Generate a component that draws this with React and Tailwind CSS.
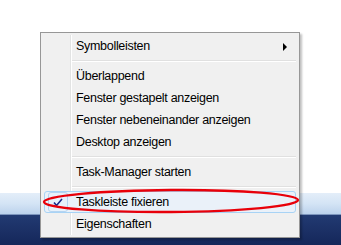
import React from 'react';

const items = [
    { label: 'Symbolleisten', arrow: true },
    { sep: true },
    { label: 'Überlappend' },
    { label: 'Fenster gestapelt anzeigen' },
    { label: 'Fenster nebeneinander anzeigen' },
    { label: 'Desktop anzeigen' },
    { sep: true },
    { label: 'Task-Manager starten' },
    { sep: true },
    { label: 'Taskleiste fixieren', checked: true },
    { label: 'Eigenschaften' },
];

const MenuItem = ({ item }) => {
    if (item.sep) {
        return (
            <div className="h-[8px] flex flex-col justify-center pl-[30px] pr-[3px]">
                <div className="h-px bg-[#e0e0e0]" />
                <div className="h-px bg-white" />
            </div>
        );
    }
    return (
        <div
            className={
                'relative h-[22px] flex items-center mx-[3px] rounded-[3px] border ' +
                (item.checked ? 'border-[#a8d3f5] bg-[#eaf1f9]' : 'border-transparent')
            }
        >
            <div className="w-[28px] h-full flex items-center justify-center">
                {item.checked && (
                    <div className="w-[20px] h-[20px] rounded-[3px] border border-[#b4d4f1] bg-[#e7f1fb] flex items-center justify-center ml-[-2px]">
                        <svg width="10" height="9" viewBox="0 0 10 9">
                            <path d="M1 4.5 L3.5 7.5 L9 1" stroke="#1b2b8a" strokeWidth="1.6" fill="none" />
                        </svg>
                    </div>
                )}
            </div>
            <span className="pl-[3px] text-[12.5px] tracking-[-0.3px] text-black">{item.label}</span>
            {item.arrow && (
                <svg className="absolute right-[8px] top-[7px]" width="4" height="8" viewBox="0 0 4 8">
                    <path d="M0 0 L4 4 L0 8 Z" fill="#000" />
                </svg>
            )}
        </div>
    );
};

const App = () => {
    return (
        <div className="relative w-[341px] h-[245px] bg-white overflow-hidden" style={{ fontFamily: '"Liberation Sans", Arial, sans-serif' }}>
            <div className="absolute left-0 right-0 top-[193px] bottom-0 flex flex-col">
                <div className="h-[21px] bg-gradient-to-b from-[#e4eef9] via-[#d4e4f5] to-[#bcd2ec]" />
                <div className="h-px bg-[#7d95bd]" />
                <div className="flex-1 bg-gradient-to-b from-[#223a72] to-[#15275a]" />
            </div>
            <div className="absolute left-[40px] top-[32px] w-[260px] h-[206px] bg-[#f0f0f0] border border-[#979797] py-[2px] shadow-[2px_2px_2px_rgba(0,0,0,0.25)]">
                <div className="absolute left-[29px] top-[2px] bottom-[2px] w-px bg-[#e2e3e3]" />
                <div className="absolute left-[30px] top-[2px] bottom-[2px] w-px bg-white" />
                {items.map((item, i) => (
                    <MenuItem key={i} item={item} />
                ))}
            </div>
            <svg className="absolute left-0 top-0" width="341" height="245" viewBox="0 0 341 245">
                <ellipse cx="171" cy="201" rx="127" ry="11" fill="none" stroke="#e8000a" strokeWidth="2.4" transform="rotate(-0.4 171 201)" />
            </svg>
        </div>
    );
};

export default App;
